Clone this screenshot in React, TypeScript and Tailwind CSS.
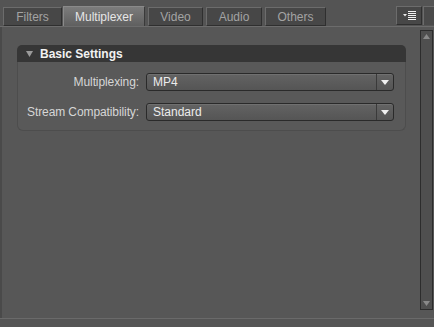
import React from "react";

const font = { fontFamily: '"Liberation Sans", Arial, sans-serif' };

function Tab({ label, w, selected }: { label: string; w: number; selected?: boolean }) {
  if (selected) {
    return (
      <div
        className="h-[20px] flex items-center justify-center text-[12px] text-[#e6e6e6] bg-gradient-to-b from-[#7c7c7c] to-[#5f5f5f] border-t border-l border-r border-[#8a8a8a] border-r-[#3a3a3a]"
        style={{ width: w }}
      >
        {label}
      </div>
    );
  }
  return (
    <div
      className="h-[19px] flex items-center justify-center text-[12px] text-[#a3a3a3] bg-[#474747] border border-[#6c6c6c] border-r-[#2f2f2f] border-b-[#2f2f2f]"
      style={{ width: w }}
    >
      {label}
    </div>
  );
}

function Select({ value }: { value: string }) {
  return (
    <div className="w-[248px] h-[18px] flex rounded-[3px] border border-[#2a2a2a] bg-gradient-to-b from-[#636363] to-[#555555] shadow-[inset_0_1px_0_#707070]">
      <div className="flex-1 flex items-center pl-[6px] text-[12px] text-[#ececec]">{value}</div>
      <div className="w-[17px] flex items-center justify-center border-l border-[#3a3a3a]">
        <svg width="8" height="5" viewBox="0 0 8 5">
          <path d="M0 0 H8 L4 5 Z" fill="#f0f0f0" />
        </svg>
      </div>
    </div>
  );
}

export default function App() {
  return (
    <div className="w-[434px] h-[327px] bg-[#575757] flex flex-col overflow-hidden" style={font}>
      {/* tab bar */}
      <div className="h-[27px] flex items-end pl-[3px] border-b border-[#6c6c6c] bg-[#545454]">
        <div className="flex items-end gap-[1px]">
          <Tab label="Filters" w={59} />
          <Tab label="Multiplexer" w={82} selected />
          <div className="w-[1px]" />
          <Tab label="Video" w={55} />
          <div className="w-[1px]" />
          <Tab label="Audio" w={56} />
          <div className="w-[1px]" />
          <Tab label="Others" w={61} />
        </div>
        <div className="flex-1" />
        <div className="w-[26px] h-[19px] mb-[1px] bg-[#474747] border border-[#6c6c6c] border-r-[#2f2f2f] border-b-[#2f2f2f] flex items-center justify-center gap-[1px]">
          <svg width="13" height="9" viewBox="0 0 13 9">
            <path d="M0 3 H4 L2 5.5 Z" fill="#e8e8e8" />
            <rect x="5" y="0" width="8" height="1" fill="#f0f0f0" />
            <rect x="5" y="2" width="8" height="1" fill="#f0f0f0" />
            <rect x="5" y="4" width="8" height="1" fill="#f0f0f0" />
            <rect x="5" y="6" width="8" height="1" fill="#f0f0f0" />
            <rect x="5" y="8" width="8" height="1" fill="#f0f0f0" />
          </svg>
        </div>
        <div className="w-[11px] h-[19px] mb-[1px] ml-[1px] bg-[#4a4a4a] border-t border-l border-[#6c6c6c]" />
      </div>

      {/* content */}
      <div className="flex-1 flex border-l-2 border-[#4a4a4a]">
        <div className="flex-1 pt-[18px] pl-[15px] pr-[14px]">
          <div className="flex flex-col">
            <div className="h-[17px] bg-[#363636] rounded-t-[5px] flex items-center pl-[9px] gap-[7px]">
              <svg width="7" height="6" viewBox="0 0 7 6">
                <path d="M0 0 H7 L3.5 6 Z" fill="#9a9a9a" />
              </svg>
              <span className="text-[12px] font-bold text-[#f2f2f2]">Basic Settings</span>
            </div>
            <div className="h-[69px] border border-t-0 border-[#4d4d4d] rounded-b-[6px] bg-[#595959] flex flex-col pt-[11px] gap-[12px] pr-[11px]">
              <div className="flex items-center justify-end gap-[7px]">
                <span className="text-[12px] text-[#d6d6d6] tracking-[-0.1px]">Multiplexing:</span>
                <Select value="MP4" />
              </div>
              <div className="flex items-center justify-end gap-[7px]">
                <span className="text-[12px] text-[#d6d6d6] tracking-[-0.1px]">Stream Compatibility:</span>
                <Select value="Standard" />
              </div>
            </div>
          </div>
        </div>
        {/* scrollbar */}
        <div className="w-[13px] mt-[3px] mb-[8px] mr-[1px] bg-[#4f4f4f] border border-[#2c2c2c] flex flex-col justify-between items-center py-[3px]">
          <svg width="7" height="5" viewBox="0 0 7 5">
            <path d="M0 5 H7 L3.5 0 Z" fill="#8a8a8a" />
          </svg>
          <svg width="7" height="5" viewBox="0 0 7 5">
            <path d="M0 0 H7 L3.5 5 Z" fill="#8a8a8a" />
          </svg>
        </div>
      </div>
      <div className="h-[9px] border-t border-[#6a6a6a] bg-[#555555]" />
    </div>
  );
}
